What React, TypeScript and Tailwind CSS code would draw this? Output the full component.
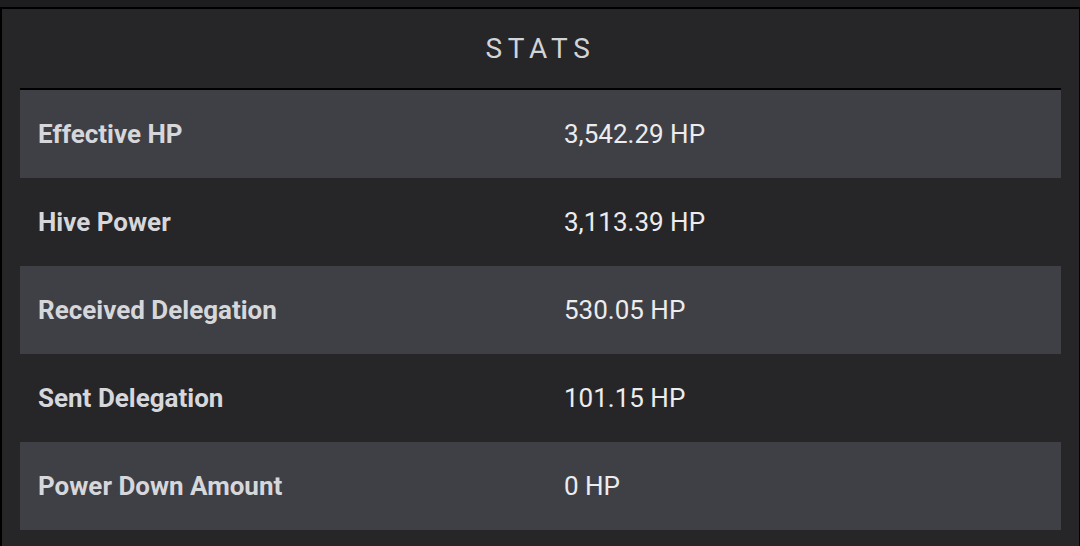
const rows = [
  { label: 'Effective HP', value: '3,542.29 HP' },
  { label: 'Hive Power', value: '3,113.39 HP' },
  { label: 'Received Delegation', value: '530.05 HP' },
  { label: 'Sent Delegation', value: '101.15 HP' },
  { label: 'Power Down Amount', value: '0 HP' },
]

export default function App() {
  return (
    <div className="h-[546px] w-[1080px] overflow-hidden bg-[#1d1d1f] pt-[7px] font-['Roboto',sans-serif]">
      <div className="h-full border-t-2 border-l-2 border-r border-black bg-[#262628] px-[18px]">
        <h2 className="flex h-[79px] items-center justify-center text-[28px] font-normal tracking-[0.2em] text-[#d2d3d7]">
          STATS
        </h2>
        <div className="border-t-2 border-black">
          {rows.map((r, i) => (
            <div
              key={r.label}
              className={`flex h-[88px] items-center ${i % 2 === 0 ? 'bg-[#3f4046]' : 'bg-[#262628]'}`}
            >
              <div className="w-[544px] pl-[18px] text-[26px] font-bold text-[#d6d7db]">{r.label}</div>
              <div className="text-[26px] text-[#ececee]">{r.value}</div>
            </div>
          ))}
        </div>
      </div>
    </div>
  )
}
